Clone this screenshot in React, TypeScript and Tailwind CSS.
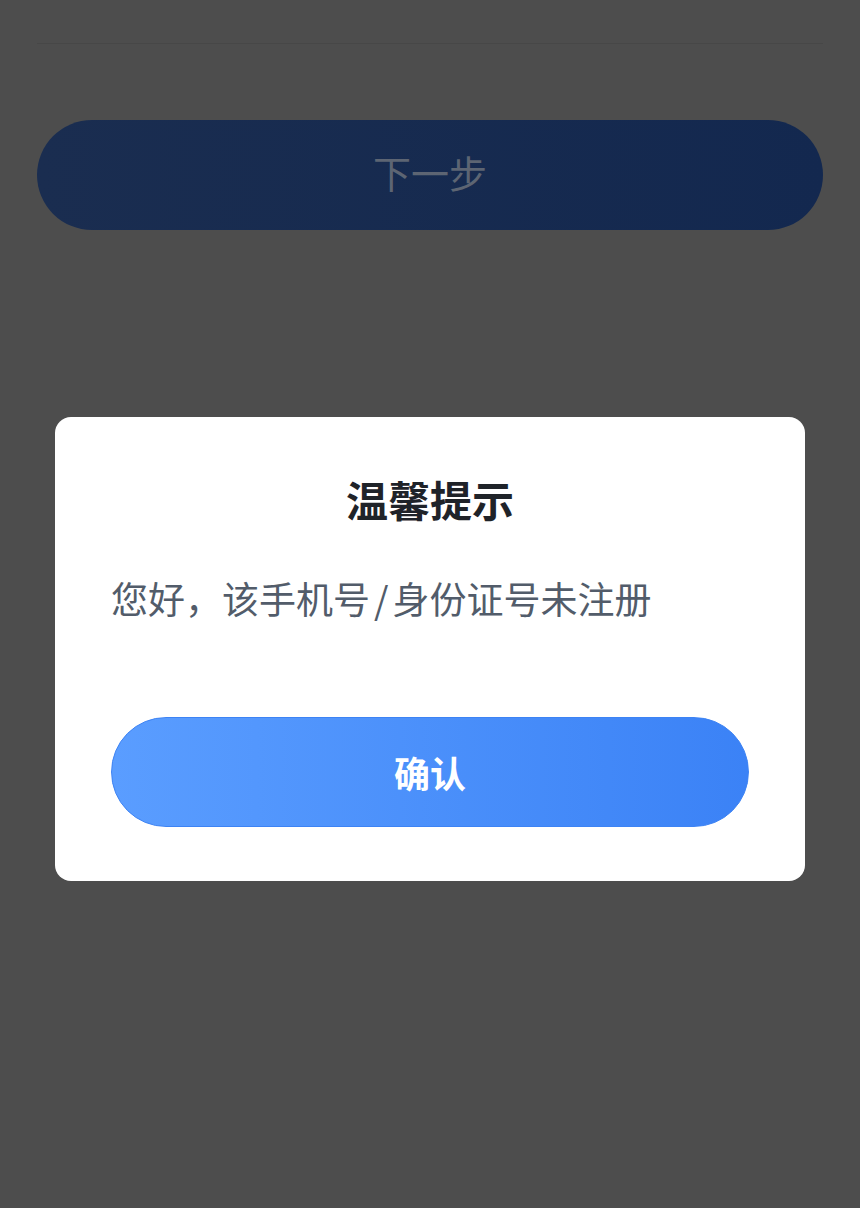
import React from "react";

export default function App() {
  return (
    <div
      className="relative min-h-[1208px] w-full bg-[#4d4d4d]"
      style={{ fontFamily: '"Noto Sans CJK SC", "Noto Sans", sans-serif' }}
    >
      <div className="px-[37px] pt-[43px]">
        <div className="h-px w-full bg-[#474747]" />
        <button className="mt-[76px] flex h-[110px] w-full items-center justify-center rounded-full bg-gradient-to-r from-[#1a2d50] to-[#13284f] pb-[6px] text-[38px] leading-none text-[#5d6573]">
          下一步
        </button>
      </div>

      <div className="absolute inset-x-0 top-[417px] flex justify-center">
        <div className="flex w-[750px] flex-col rounded-[16px] bg-white px-[56px] pb-[54px] pt-[52px]">
          <h2 className="text-center text-[42px] font-bold leading-[60px] text-[#1f2329]">
            温馨提示
          </h2>
          <p className="mt-[42px] text-[37px] leading-[54px] text-[#525c6a]">
            您好，该手机号<span className="px-[4px]">/</span>身份证号未注册
          </p>
          <button className="mt-[92px] flex h-[110px] w-full items-center justify-center rounded-full border border-[#3d83f4] bg-gradient-to-r from-[#5a9dff] to-[#3b82f6] text-[36px] font-bold text-white">
            确认
          </button>
        </div>
      </div>
    </div>
  );
}
